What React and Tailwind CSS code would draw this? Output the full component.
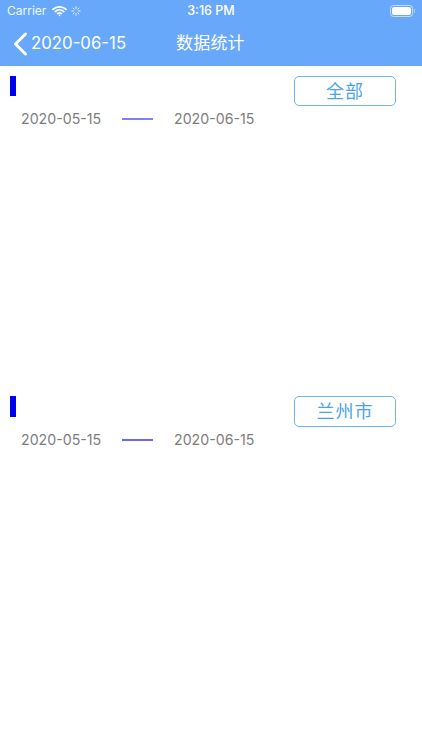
import React from 'react';

const cjk = "font-['Inter','Noto_Sans_CJK_SC',sans-serif]";

const StatsSection = ({ label, start, end, lineClass }) => (
  <section className="h-[320.5px] pt-[10px]">
    <div className="flex items-start justify-between pl-[10px] pr-[26px]">
      <div className="w-[6px] h-[20.5px] bg-[#0000f0]"></div>
      <button className={`w-[102px] h-[30.5px] border-[1.5px] border-[#6db5ee] rounded-[5px] text-[#4aa5e8] text-[18px] leading-[29px] tracking-[1px] text-center bg-white ${cjk}`}>
        {label}
      </button>
    </div>
    <div className="flex items-center h-[20px] mt-[3px] pl-[21px] text-[14.2px] text-[#7d7d7d] font-['Inter',sans-serif]">
      <span className="w-[81px] whitespace-nowrap">{start}</span>
      <span className={`ml-[20px] w-[31px] ${lineClass}`}></span>
      <span className="ml-[21px] whitespace-nowrap">{end}</span>
    </div>
  </section>
);

const StatusBar = () => (
  <div className="relative flex items-center h-[22px] pl-[7px] pr-[7px] text-white font-['Inter',sans-serif] text-[12px]">
    <span className="opacity-90">Carrier</span>
    {/* wifi */}
    <svg className="ml-[6px] -mt-[1px]" width="15" height="12" viewBox="0 0 16 12" fill="none" stroke="white" strokeLinecap="round">
      <path d="M1 4.2C5 .6 11 .6 15 4.2" strokeWidth="1.8" />
      <path d="M3.4 6.6c2.7-2.3 6.5-2.3 9.2 0" strokeWidth="1.8" />
      <path d="M5.8 8.8c1.3-1 3.1-1 4.4 0" strokeWidth="1.7" />
      <circle cx="8" cy="10.6" r="1" fill="white" stroke="none" />
    </svg>
    {/* spinner */}
    <svg className="ml-[4px] opacity-80" width="10" height="10" viewBox="0 0 10 10" stroke="white" strokeWidth="1" strokeLinecap="round">
      <path d="M5 .7v2M5 7.3v2M.7 5h2M7.3 5h2M2 2l1.3 1.3M6.7 6.7 8 8M2 8l1.3-1.3M6.7 3.3 8 2" />
    </svg>
    <span className="absolute left-0 right-0 text-center text-[12.5px] font-medium pointer-events-none">3:16 PM</span>
    {/* battery */}
    <div className="ml-auto flex items-center">
      <div className="w-[23px] h-[12px] rounded-[3.5px] border border-white/60 p-px">
        <div className="w-full h-full rounded-[2px] bg-white"></div>
      </div>
      <div className="w-px h-[4px] bg-white/50 ml-px"></div>
    </div>
  </div>
);

export default function App() {
  return (
    <div className="w-[422px] h-[750px] bg-white overflow-hidden">
      <header className="h-[65.5px] bg-[#68a8fb]">
        <StatusBar />
        <div className="relative flex items-center h-[43px] pl-[13px] text-white">
          <svg width="15" height="24" viewBox="0 0 15 24" fill="none" stroke="white" strokeWidth="3" strokeLinecap="round" strokeLinejoin="round">
            <path d="M12.5 2 2.5 12l10 10" />
          </svg>
          <span className="ml-[3px] text-[16.8px] font-['Inter',sans-serif]">2020-06-15</span>
          <span className={`absolute left-[176px] text-[17px] tracking-[0.2px] ${cjk}`}>数据统计</span>
        </div>
      </header>
      <StatsSection label="全部" start="2020-05-15" end="2020-06-15" lineClass="h-[2px] -mt-px bg-[#8080f0]" />
      <StatsSection label="兰州市" start="2020-05-15" end="2020-06-15" lineClass="h-[2px] bg-[#6a6aec]" />
    </div>
  );
}
